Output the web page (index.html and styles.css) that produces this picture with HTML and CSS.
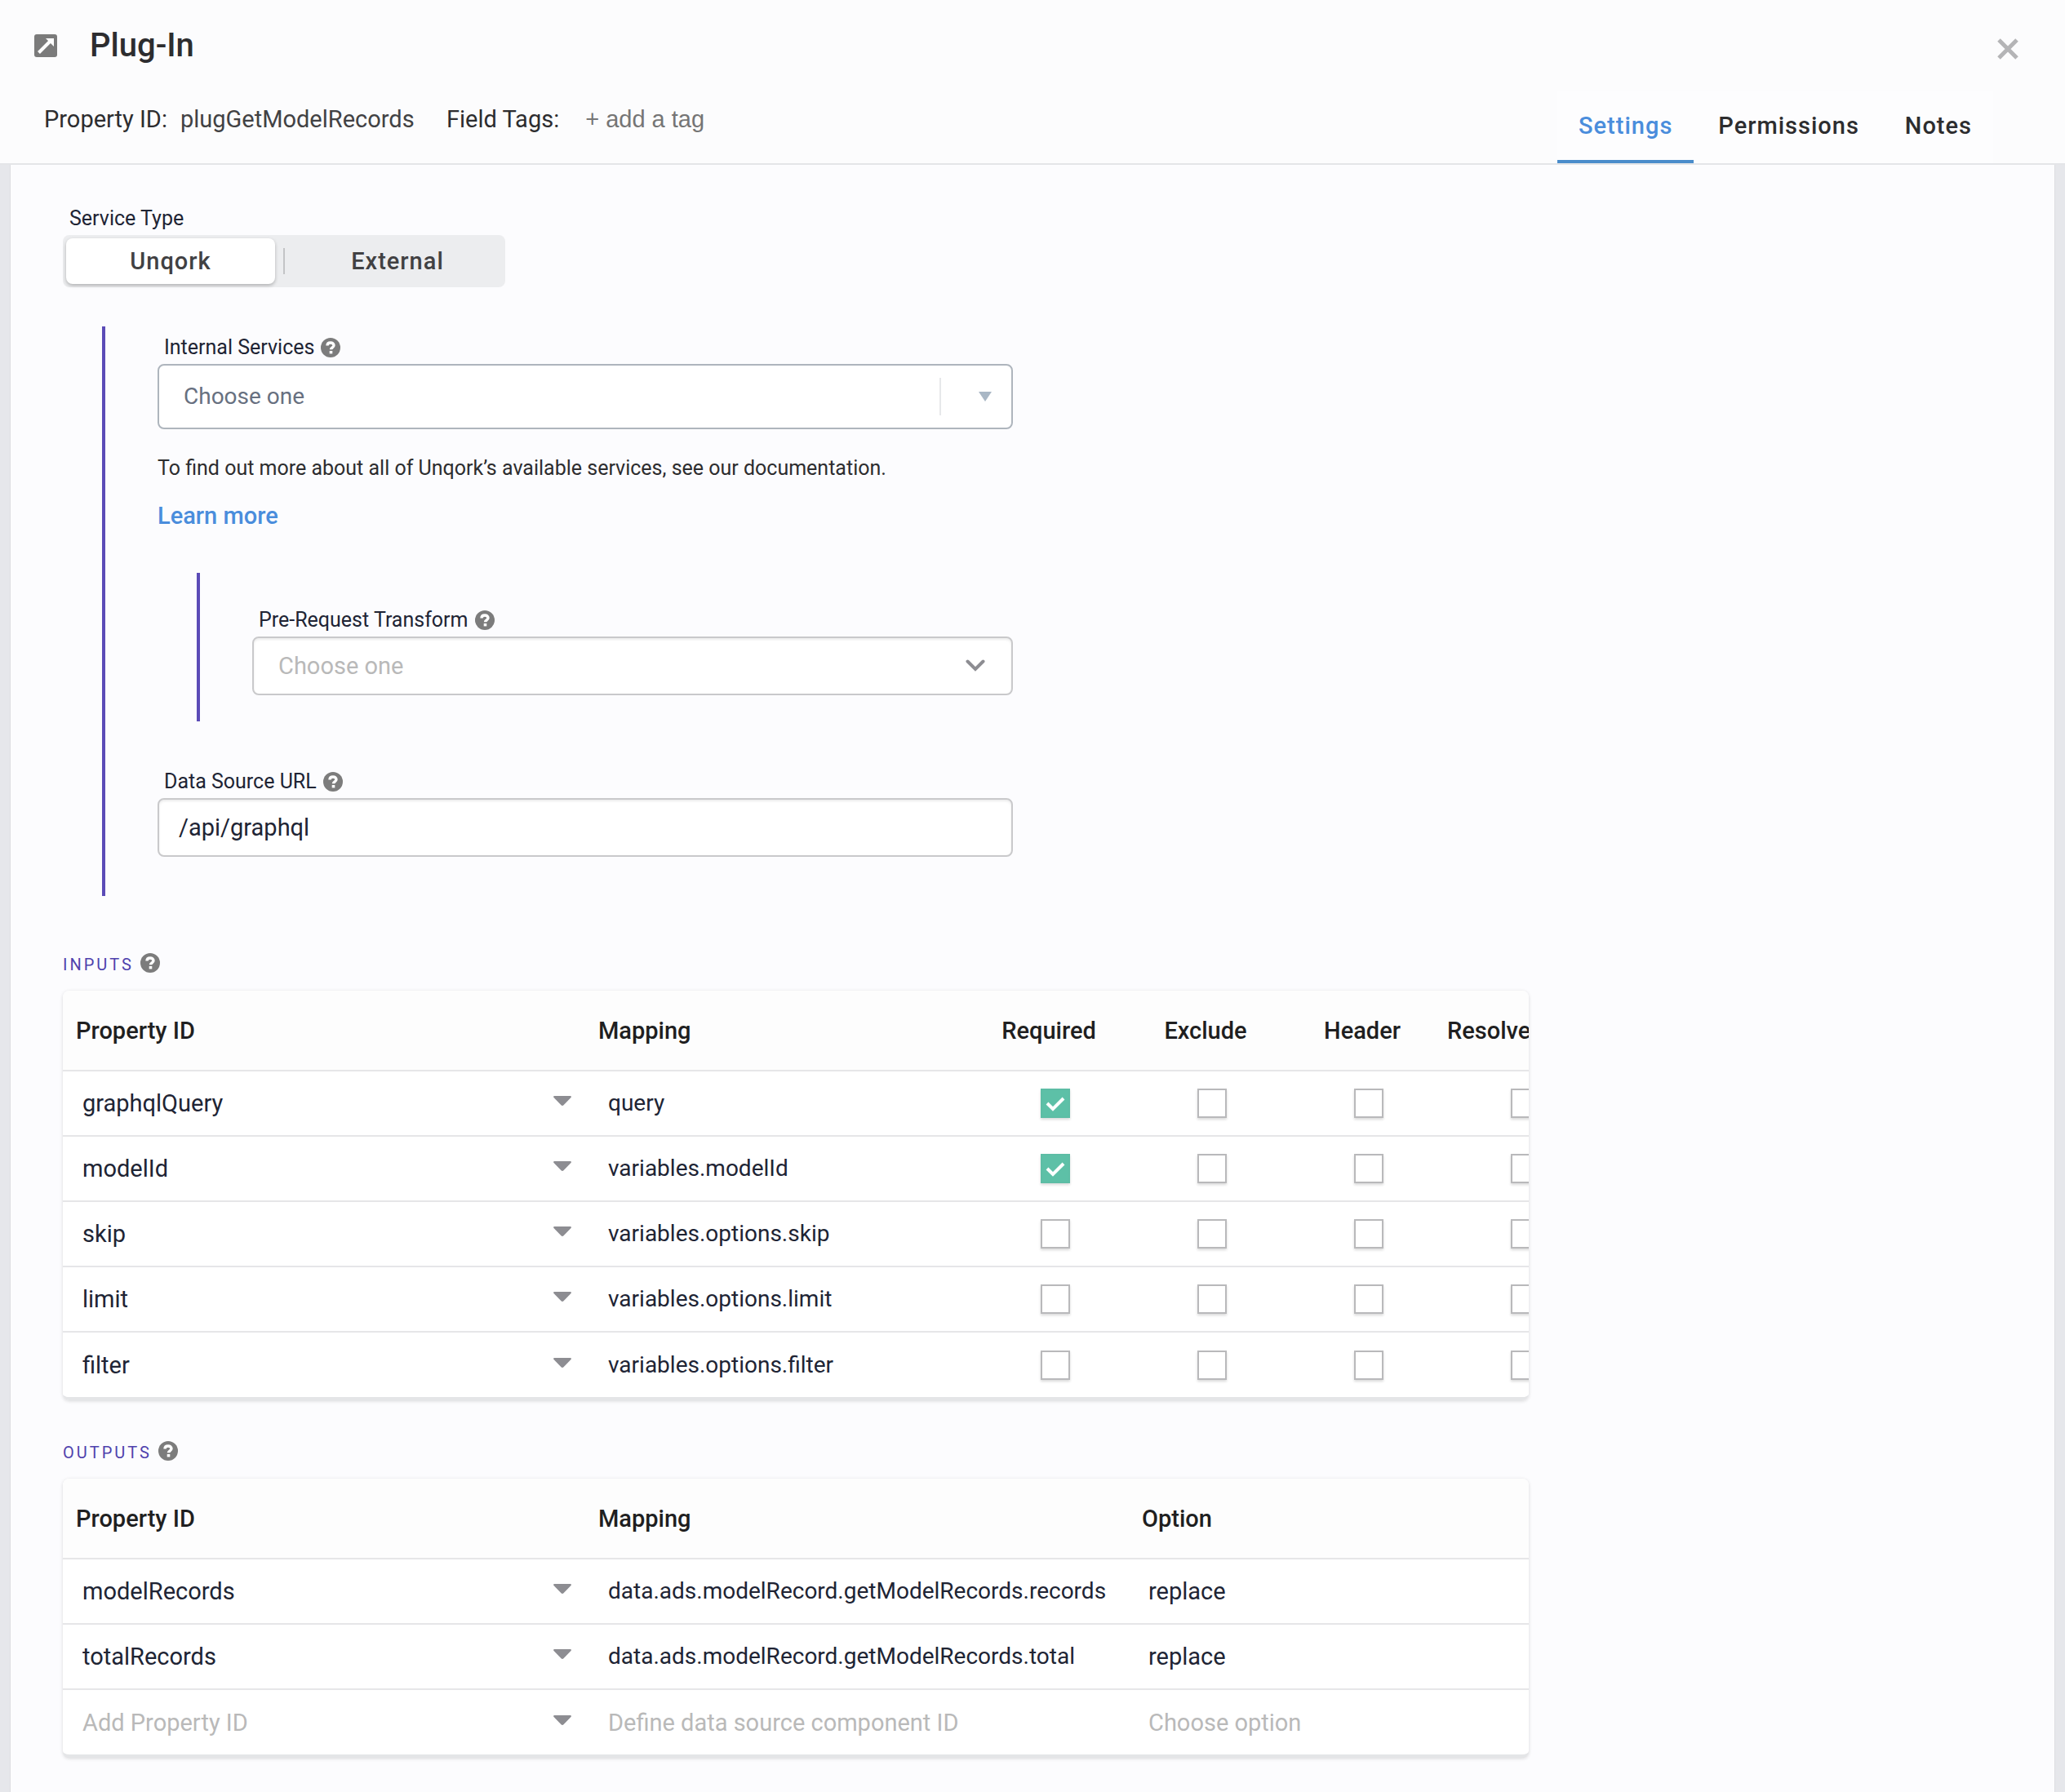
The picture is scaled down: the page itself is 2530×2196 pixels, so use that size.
FILE: index.html
```html
<!DOCTYPE html>
<html lang="en">
<head>
    <meta charset="UTF-8">
    <meta name="viewport" content="width=device-width, initial-scale=1.0">
    <title>Plug-In</title>
    <link rel="stylesheet" href="styles.css">
</head>
<body>
    <!-- Shared icons -->
    <svg class="sprite" aria-hidden="true">
        <symbol id="help" viewBox="0 0 24 24">
            <circle cx="12" cy="12" r="12" fill="#7c7c7c"/>
            <path d="M8 9.600C8 7.200 9.700 6 12 6s4 1.300 4 3.300c0 2.500-3.500 2.500-3.500 5" fill="none" stroke="#fff" stroke-width="3.400"/>
            <rect x="10.700" y="16" width="3.600" height="3.400" fill="#fff"/>
        </symbol>
        <symbol id="caret" viewBox="0 0 22 12">
            <path d="M1.500 0h19c1.300 0 1.800 1 1 2l-9 9.300c-.9.900-2.100.900-3 0L.5 2C-.3 1 .2 0 1.500 0z" fill="#8d8d92"/>
        </symbol>
    </svg>

    <header class="header">
        <div class="title-row">
            <svg class="title-icon" viewBox="0 0 28 28" aria-hidden="true">
                <rect width="28" height="28" rx="3" fill="#7b7b7b"/>
                <path d="M5.500 22.500L20 8" stroke="#fff" stroke-width="4"/>
                <path d="M14 5h10v10z" fill="#fff"/>
            </svg>
            <h1>Plug-In</h1>
            <button class="close" aria-label="Close">
                <svg viewBox="0 0 28 28"><path d="M3 3l22 22M25 3L3 25" stroke="#b4b4b6" stroke-width="5"/></svg>
            </button>
        </div>
        <div class="meta-row">
            <div class="meta">
                <label for="property-id">Property ID:</label>
                <input class="property-id" id="property-id" type="text" value="plugGetModelRecords">
                <label for="tags">Field Tags:</label>
                <input class="tags" id="tags" type="text" placeholder="+ add a tag">
            </div>
            <nav class="tabs">
                <a class="tab active" href="#settings">Settings</a>
                <a class="tab" href="#permissions">Permissions</a>
                <a class="tab" href="#notes">Notes</a>
            </nav>
        </div>
    </header>

    <main class="panel" id="settings">
        <div class="label" id="service-type">Service Type</div>
        <div class="segment" role="group" aria-labelledby="service-type">
            <button class="segment-btn selected">Unqork</button>
            <span class="segment-divider"></span>
            <button class="segment-btn">External</button>
        </div>

        <section class="nested service">
            <div class="field">
                <div class="label"><label for="services">Internal Services</label><svg class="help"><use href="#help"/></svg></div>
                <div class="select-wrap">
                    <select class="control services" id="services"><option>Choose one</option></select>
                    <span class="services-arrow">
                        <svg viewBox="0 0 16 12"><path d="M0 0h16L8 12z" fill="#a9b7c5"/></svg>
                    </span>
                </div>
            </div>
            <p class="hint">To find out more about all of Unqork’s available services, see our documentation.</p>
            <a class="learn-more" href="#docs">Learn more</a>

            <div class="nested transform">
                <div class="label"><label for="transform">Pre-Request Transform</label><svg class="help"><use href="#help"/></svg></div>
                <div class="select-wrap">
                    <select class="control placeholder" id="transform"><option>Choose one</option></select>
                    <svg class="chevron" viewBox="0 0 24 16"><path d="M2.500 2.500L12 12l9.500-9.500" fill="none" stroke="#8d8d92" stroke-width="4" stroke-linecap="round"/></svg>
                </div>
            </div>

            <div class="field">
                <div class="label"><label for="url">Data Source URL</label><svg class="help"><use href="#help"/></svg></div>
                <input class="control" id="url" type="text" value="/api/graphql">
            </div>
        </section>

        <h2>Inputs <svg class="help"><use href="#help"/></svg></h2>
        <div class="card">
            <table class="inputs-table">
                <colgroup>
                    <col class="col-property"><col class="col-mapping">
                    <col class="col-check"><col class="col-check"><col class="col-check"><col class="col-check">
                </colgroup>
                <thead>
                    <tr>
                        <th>Property ID</th>
                        <th>Mapping</th>
                        <th class="center">Required</th>
                        <th class="center">Exclude</th>
                        <th class="center">Header</th>
                        <th class="clipped">Resolve</th>
                    </tr>
                </thead>
                <tbody id="inputs-body"></tbody>
            </table>
        </div>

        <h2>Outputs <svg class="help"><use href="#help"/></svg></h2>
        <div class="card">
            <table class="outputs-table">
                <colgroup>
                    <col class="col-property"><col class="col-target"><col>
                </colgroup>
                <thead>
                    <tr>
                        <th>Property ID</th>
                        <th>Mapping</th>
                        <th>Option</th>
                    </tr>
                </thead>
                <tbody id="outputs-body"></tbody>
            </table>
        </div>
    </main>

    <script src="script.js"></script>
</body>
</html>
```

FILE: styles.css
```css
* {
    box-sizing: border-box;
}

body {
    margin: 0;
    min-height: 100vh;
    display: flex;
    flex-direction: column;
    background: #e6e7eb;
    color: #202434;
    font-family: Roboto, sans-serif;
    font-size: 29px;
    line-height: 32px;
}

input, select, button {
    font: inherit;
    color: inherit;
    border: none;
    background: none;
    padding: 0;
    margin: 0;
    min-width: 0;
}

input, select {
    appearance: none;
    opacity: 1;
}

::placeholder {
    color: #b9b9b9;
    opacity: 1;
}

a {
    color: #4a8ddc;
    text-decoration: none;
}

svg {
    display: block;
}

.sprite {
    position: absolute;
    width: 0;
    height: 0;
}

/* Header */
.header {
    background: #fcfcfd;
    border-bottom: 2px solid #e4e5e8;
    color: #2d2d2f;
}

.title-row {
    display: flex;
    align-items: center;
    height: 112px;
    padding: 0 56px 0 42px;
}

.title-icon {
    width: 28px;
    height: 28px;
}

h1 {
    margin: 0 auto 0 40px;
    font-size: 40px;
    line-height: 48px;
    font-weight: 500;
}

.close {
    width: 28px;
    height: 28px;
    margin-top: 8px;
    cursor: pointer;
}

.meta-row {
    display: flex;
    justify-content: space-between;
    height: 88px;
    padding: 0 88px 0 54px;
}

.meta {
    display: flex;
    align-items: center;
    height: 68px;
}

.property-id {
    width: 288px;
    margin: 0 38px 0 16px;
    color: #424244;
}

.tags {
    width: 240px;
    margin-left: 32px;
    font-family: "Liberation Sans", sans-serif;
}

.tags::placeholder {
    color: #757575;
}

.tabs {
    display: flex;
    gap: 4px;
    background: #fdfdfe;
}

.tab {
    display: flex;
    align-items: center;
    padding: 0 26px;
    border-bottom: 4px solid transparent;
    color: #2d2d2f;
    font-weight: 500;
    letter-spacing: 1px;
}

.tab.active {
    color: #4a8ddc;
    border-color: #4a8ccb;
}

/* Panel */
.panel {
    flex: 1;
    margin: 0 12px;
    padding: 50px 64px 40px;
    background: #fcfcfe;
    border: solid #dcdde1;
    border-width: 0 1px;
}

.label {
    display: flex;
    align-items: center;
    gap: 8px;
    height: 32px;
    margin-bottom: 4px;
    padding-left: 8px;
    font-size: 25px;
}

.help {
    width: 24px;
    height: 24px;
}

.segment {
    display: inline-flex;
    align-items: center;
    height: 64px;
    padding: 4px;
    border-radius: 8px;
    background: #ecedef;
}

.segment-btn {
    width: 256px;
    height: 56px;
    border-radius: 8px;
    color: #414143;
    font-weight: 500;
    letter-spacing: 1px;
    cursor: pointer;
}

.segment-btn.selected {
    background: #fff;
    box-shadow: 0 2px 4px rgba(0, 0, 0, 0.25);
}

.segment-divider {
    width: 2px;
    height: 32px;
    margin: 0 10px;
    background: #c3c4c6;
}

.nested {
    border-left: 4px solid #5b4bb7;
    padding-left: 64px;
}

.service {
    max-width: 1116px;
    margin: 48px 0 0 48px;
    padding-top: 10px;
    padding-bottom: 48px;
}

.transform {
    margin: 54px 0 58px 48px;
    padding-top: 42px;
    padding-bottom: 32px;
}

.select-wrap {
    display: grid;
    align-items: center;
}

.select-wrap > * {
    grid-area: 1 / 1;
}

.control {
    display: block;
    width: 100%;
    height: 72px;
    padding: 0 24px;
    border: 2px solid #c9c9cb;
    border-radius: 8px;
    background: #fff;
    box-shadow: inset 0 2px 3px rgba(0, 0, 0, 0.08);
}

.control.services {
    height: 80px;
    padding: 0 30px;
    border-color: #aeb5bd;
    box-shadow: none;
    color: #677080;
    font-size: 28px;
}

.control.placeholder {
    padding: 0 30px;
    color: #b9b9b9;
}

.services-arrow {
    justify-self: end;
    display: flex;
    align-items: center;
    justify-content: flex-end;
    width: 90px;
    height: 46px;
    padding-right: 26px;
    border-left: 2px solid #e7e8ea;
    pointer-events: none;
}

.services-arrow svg {
    width: 16px;
    height: 12px;
}

.chevron {
    justify-self: end;
    width: 24px;
    height: 16px;
    margin-right: 34px;
    pointer-events: none;
}

.hint {
    margin: 32px 0 26px;
    color: #2d2d2f;
    font-size: 25px;
}

.learn-more {
    display: block;
    font-weight: 500;
}

/* Input and output tables */
h2 {
    display: flex;
    align-items: center;
    gap: 8px;
    margin: 70px 0 18px;
    color: #4f42ad;
    font-size: 20px;
    line-height: 28px;
    font-weight: 400;
    letter-spacing: 3px;
    text-transform: uppercase;
}

h2 .help {
    margin-bottom: 4px;
}

.card {
    max-width: 1796px;
    overflow-x: auto;
    scrollbar-width: none;
    border-radius: 8px;
    background: #fff;
    border-bottom: 4px solid #e4e5e7;
    box-shadow: 0 1px 4px rgba(0, 0, 0, 0.15);
}

.card + h2 {
    margin-top: 50px;
}

table {
    border-collapse: collapse;
    table-layout: fixed;
}

.inputs-table {
    width: 1888px;
}

.outputs-table {
    width: 100%;
}

.col-property {
    width: 640px;
}

.col-mapping {
    width: 480px;
}

.col-check {
    width: 192px;
}

.col-target {
    width: 666px;
}

th {
    height: 98px;
    padding: 0 16px;
    background: #fdfdfd;
    color: #1f1f21;
    font-weight: 500;
    text-align: left;
}

th.center {
    padding-left: 0;
    text-align: center;
}

th.clipped {
    padding: 0;
}

td {
    height: 80px;
    padding: 0 24px;
    border-top: 2px solid #e6e6e8;
}

td input[type="text"], td select {
    display: block;
    width: 100%;
}

td.mapping {
    padding: 0 16px 0 28px;
}

td.mapping input {
    font-size: 28px;
}

td.mapping input:placeholder-shown {
    font-size: 29px;
}

td.check {
    padding: 0;
}

.combo {
    display: flex;
    align-items: center;
    margin-right: -6px;
}

.caret {
    width: 22px;
    height: 20px;
    margin-bottom: 6px;
    cursor: pointer;
}

.caret svg {
    width: 22px;
    height: 12px;
}

select.empty {
    color: #b9b9b9;
}

input[type="checkbox"] {
    display: block;
    width: 36px;
    height: 36px;
    margin: 0 auto;
    border: 2px solid #b9b9bb;
    background: #fff;
    box-shadow: 0 2px 3px rgba(0, 0, 0, 0.15);
}

input[type="checkbox"]:checked {
    border-color: #5dbda5;
    background: #5dc0a7 url("data:image/svg+xml,%3Csvg xmlns='http://www.w3.org/2000/svg' viewBox='0 0 32 32'%3E%3Cpath d='M6 16l7 7L26 10' fill='none' stroke='white' stroke-width='4'/%3E%3C/svg%3E") center / 32px 32px no-repeat;
}
```

FILE: script.js
```js
const inputs = [
    { id: 'graphqlQuery', mapping: 'query', required: true },
    { id: 'modelId', mapping: 'variables.modelId', required: true },
    { id: 'skip', mapping: 'variables.options.skip' },
    { id: 'limit', mapping: 'variables.options.limit' },
    { id: 'filter', mapping: 'variables.options.filter' }
];

const outputs = [
    { id: 'modelRecords', mapping: 'data.ads.modelRecord.getModelRecords.records', option: 'replace' },
    { id: 'totalRecords', mapping: 'data.ads.modelRecord.getModelRecords.total', option: 'replace' },
    { id: '', mapping: '', option: '' }
];

// Property ID and mapping cells are the same in both tables
function baseCells(row) {
    return `
        <td>
            <div class="combo">
                <input type="text" value="${row.id}" placeholder="Add Property ID" aria-label="Property ID">
                <button class="caret" aria-label="Show properties"><svg><use href="#caret"/></svg></button>
            </div>
        </td>
        <td class="mapping">
            <input type="text" value="${row.mapping}" placeholder="Define data source component ID" aria-label="Mapping">
        </td>`;
}

document.getElementById('inputs-body').innerHTML = inputs.map(row => {
    const checks = ['Required', 'Exclude', 'Header', 'Resolve'].map(name =>
        `<td class="check"><input type="checkbox" aria-label="${name}"${name === 'Required' && row.required ? ' checked' : ''}></td>`
    ).join('');
    return `<tr>${baseCells(row)}${checks}</tr>`;
}).join('');

document.getElementById('outputs-body').innerHTML = outputs.map(row => `
    <tr>
        ${baseCells(row)}
        <td>
            <select class="${row.option ? '' : 'empty'}" aria-label="Option">
                <option>${row.option || 'Choose option'}</option>
            </select>
        </td>
    </tr>`).join('');
```
